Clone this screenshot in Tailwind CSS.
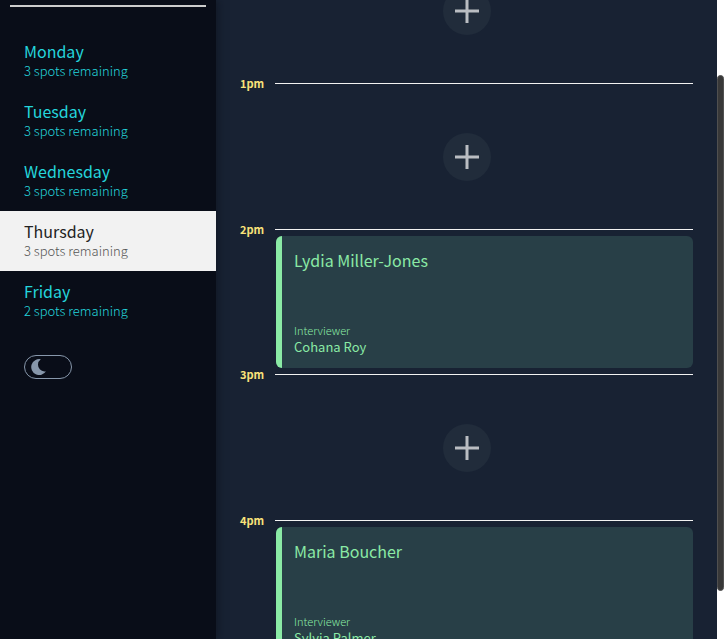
<!DOCTYPE html>
<html lang="en">
<head>
<meta charset="utf-8">
<title>Interview Scheduler</title>
<script src="https://cdn.jsdelivr.net/npm/@tailwindcss/browser@4"></script>
</head>
<body class="flex h-screen overflow-hidden bg-white font-['Noto_Sans_CJK_SC','Noto_Sans',sans-serif]">
<aside class="relative z-10 flex w-[216px] shrink-0 flex-col bg-[#090d18] pt-[5px] shadow-[2px_0_8px_rgba(9,13,24,0.5)]">
  <hr class="mx-[10px] mb-6 border-0 border-t-2 border-[#cccccc]">
  <nav aria-label="Days">
    <ul class="text-[#24d5dc]">
      <li><a href="#monday" class="flex h-[60px] flex-col justify-center px-6 pb-[2px]"><span class="text-[16px] leading-[20px]">Monday</span><span class="text-[13px] leading-[19px] font-light">3 spots remaining</span></a></li>
      <li><a href="#tuesday" class="flex h-[60px] flex-col justify-center px-6 pb-[2px]"><span class="text-[16px] leading-[20px]">Tuesday</span><span class="text-[13px] leading-[19px] font-light">3 spots remaining</span></a></li>
      <li><a href="#wednesday" class="flex h-[60px] flex-col justify-center px-6 pb-[2px]"><span class="text-[16px] leading-[20px]">Wednesday</span><span class="text-[13px] leading-[19px] font-light">3 spots remaining</span></a></li>
      <li><a href="#thursday" aria-current="page" class="flex h-[60px] flex-col justify-center bg-[#f2f2f2] px-6 pb-[2px] text-[#222222]"><span class="text-[16px] leading-[20px]">Thursday</span><span class="text-[13px] leading-[19px] font-light text-[#555555]">3 spots remaining</span></a></li>
      <li><a href="#friday" class="flex h-[60px] flex-col justify-center px-6 pb-[2px]"><span class="text-[16px] leading-[20px]">Friday</span><span class="text-[13px] leading-[19px] font-light">2 spots remaining</span></a></li>
    </ul>
  </nav>
  <button type="button" role="switch" aria-checked="true" aria-label="Dark mode" class="mt-6 ml-6 flex h-6 w-12 items-center rounded-full border border-[#8797ab] pl-[6px]">
    <svg class="h-4 w-4" viewBox="0 0 16 16" fill="#8797ab" aria-hidden="true"><path d="M9.8.2A8 8 0 1 0 15 12.3a7.6 7.6 0 0 1-1.6.2A6.8 6.8 0 0 1 7 5.500 6.800 6.800 0 0 1 9.800.200z"/></svg>
  </button>
</aside>
<main class="min-w-0 flex-1 overflow-hidden bg-[#182233] px-6">
  <section class="-mt-14 h-[133px] pt-[43px]">
    <button type="button" aria-label="Add noon appointment" class="mr-[202px] ml-auto flex size-12 items-center justify-center rounded-full bg-[#212c3b]"><svg class="size-6" viewBox="0 0 24 24" fill="#babdc2" aria-hidden="true"><path d="M10.500 0h3v10.500H24v3H13.500V24h-3V13.500H0v-3h10.500z"/></svg></button>
  </section>
  <section>
    <header class="flex h-[13px] items-center"><h4 class="w-[35px] text-[11px] leading-[13px] font-bold text-[#fae27a]">1pm</h4><hr class="flex-1 border-0 border-t border-[#f2f2f2]"></header>
    <div class="h-[133px] pt-[43px]">
      <button type="button" aria-label="Add 1pm appointment" class="mr-[202px] ml-auto flex size-12 items-center justify-center rounded-full bg-[#212c3b]"><svg class="size-6" viewBox="0 0 24 24" fill="#babdc2" aria-hidden="true"><path d="M10.500 0h3v10.500H24v3H13.500V24h-3V13.500H0v-3h10.500z"/></svg></button>
    </div>
  </section>
  <section>
    <header class="flex h-[13px] items-center"><h4 class="w-[35px] text-[11px] leading-[13px] font-bold text-[#fae27a]">2pm</h4><hr class="flex-1 border-0 border-t border-[#f2f2f2]"></header>
    <article class="ml-9 flex h-[132px] overflow-hidden rounded-md bg-[#283f47] text-[#8aeaa5]">
      <div class="w-[6px] shrink-0 bg-[#8aeaa5]"></div>
      <div class="flex flex-1 flex-col justify-between px-3 pt-3 pb-[13px]">
        <h2 class="text-[16px] leading-[24px]">Lydia Miller-Jones</h2>
        <div><h4 class="text-[11px] leading-[15px] font-light">Interviewer</h4><h3 class="text-[13px] leading-[17px]">Cohana Roy</h3></div>
      </div>
    </article>
  </section>
  <section>
    <header class="flex h-[13px] items-center"><h4 class="w-[35px] text-[11px] leading-[13px] font-bold text-[#fae27a]">3pm</h4><hr class="flex-1 border-0 border-t border-[#f2f2f2]"></header>
    <div class="h-[133px] pt-[43px]">
      <button type="button" aria-label="Add 3pm appointment" class="mr-[202px] ml-auto flex size-12 items-center justify-center rounded-full bg-[#212c3b]"><svg class="size-6" viewBox="0 0 24 24" fill="#babdc2" aria-hidden="true"><path d="M10.500 0h3v10.500H24v3H13.500V24h-3V13.500H0v-3h10.500z"/></svg></button>
    </div>
  </section>
  <section>
    <header class="flex h-[13px] items-center"><h4 class="w-[35px] text-[11px] leading-[13px] font-bold text-[#fae27a]">4pm</h4><hr class="flex-1 border-0 border-t border-[#f2f2f2]"></header>
    <article class="ml-9 flex h-[132px] overflow-hidden rounded-md bg-[#283f47] text-[#8aeaa5]">
      <div class="w-[6px] shrink-0 bg-[#8aeaa5]"></div>
      <div class="flex flex-1 flex-col justify-between px-3 pt-3 pb-[13px]">
        <h2 class="text-[16px] leading-[24px]">Maria Boucher</h2>
        <div><h4 class="text-[11px] leading-[15px] font-light">Interviewer</h4><h3 class="text-[13px] leading-[17px]">Sylvia Palmer</h3></div>
      </div>
    </article>
  </section>
</main>
<div class="flex w-[7px] shrink-0 flex-col bg-white pt-[75px]" aria-hidden="true">
  <div class="h-[516px] rounded-full border border-[#505050] bg-[#383838]"></div>
</div>
</body>
</html>
